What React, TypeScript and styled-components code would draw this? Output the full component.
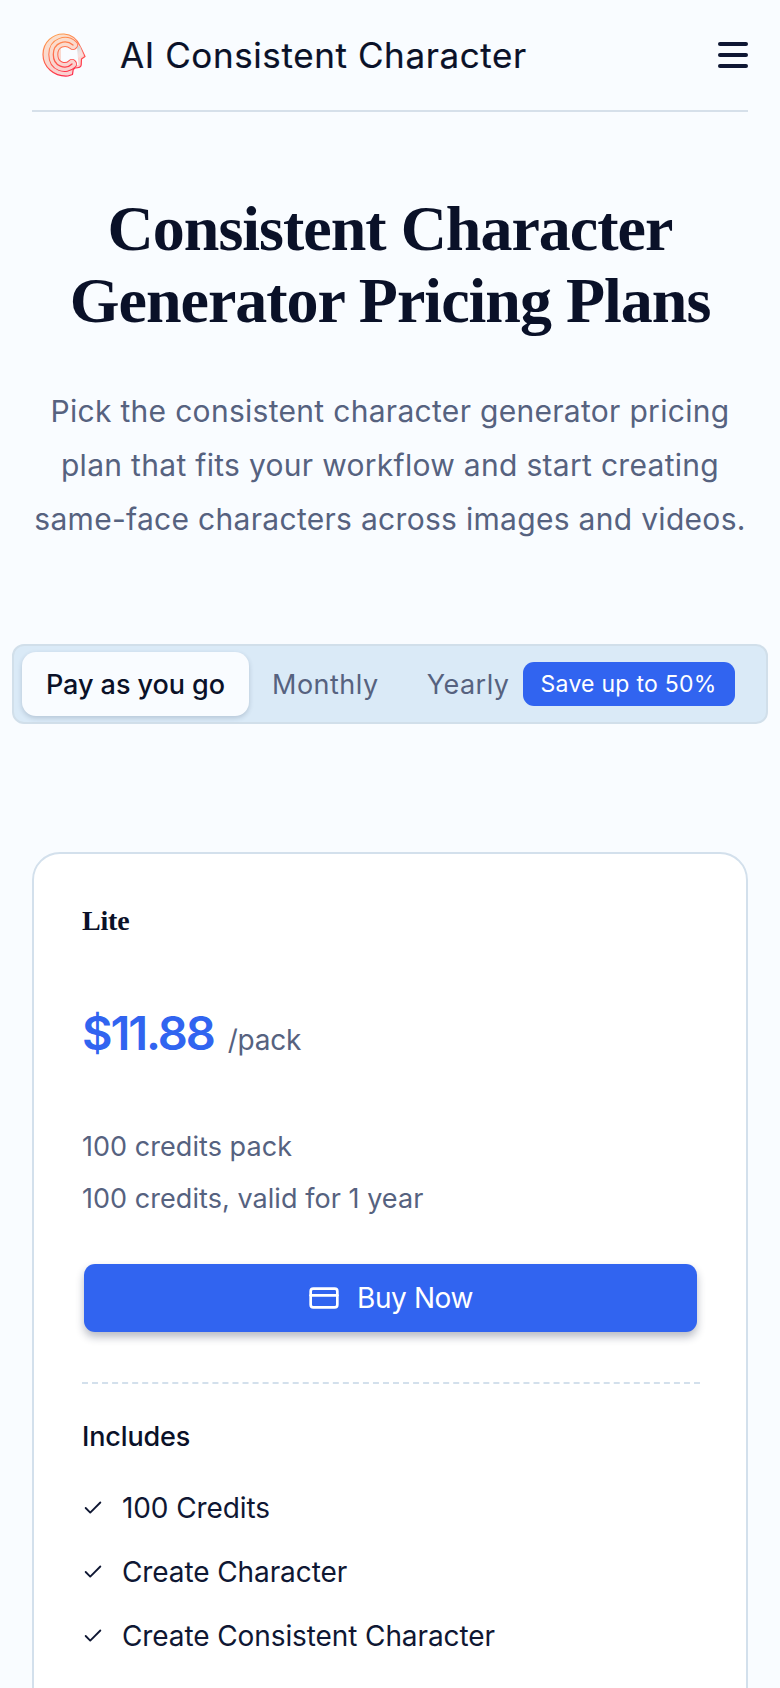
import React from "react";
import styled, { createGlobalStyle } from "styled-components";
import { Check, CreditCard } from "lucide-react";

const Global = createGlobalStyle`
  html, body { margin: 0; padding: 0; background: #f9fcff; height: 1688px; overflow: hidden; }
  * { box-sizing: border-box; }
  body { font-family: Inter, "Noto Sans", sans-serif; color: #0a1128; }
`;

const Page = styled.div`
  width: 780px;
  height: 1688px;
  overflow: hidden;
  padding: 0 32px;
`;

const Header = styled.header`
  height: 112px;
  display: flex;
  align-items: center;
  border-bottom: 2px solid #d6e0ea;
  padding: 0 0 0 10px;
`;

const LogoWrap = styled.div`
  width: 44px;
  height: 46px;
  flex: none;
  display: flex;
`;

const Brand = styled.div`
  margin-left: 34px;
  font-size: 35px;
  font-weight: 400;
  letter-spacing: 0.6px;
  flex: 1;
  color: #0a1128;
  -webkit-text-stroke: 0.2px #0a1128;
`;

const Menu = styled.div`
  width: 30px;
  display: flex;
  flex-direction: column;
  gap: 7px;
  & > i {
    display: block;
    height: 4px;
    border-radius: 2px;
    background: #0f1733;
  }
`;

const Title = styled.h1`
  margin: 0;
  padding-top: 81px;
  text-align: center;
  font-family: "Liberation Serif", serif;
  font-size: 64px;
  line-height: 72px;
  font-weight: 700;
  letter-spacing: -1px;
  color: #0a1128;
`;

const Lead = styled.p`
  margin: 0 -8px;
  padding-top: 47px;
  text-align: center;
  font-size: 30px;
  line-height: 54px;
  color: #56627f;
  letter-spacing: 0.3px;
`;

const Tabs = styled.div`
  margin: 98px -20px 0;
  height: 80px;
  display: flex;
  align-items: center;
  background: #daeaf7;
  border: 2px solid #d1dfea;
  border-radius: 12px;
  padding: 0 8px;
`;

const Tab = styled.div<{ $active?: boolean }>`
  font-size: 27px;
  font-weight: ${(p) => (p.$active ? 500 : 400)};
  height: ${(p) => (p.$active ? "64px" : "auto")};
  display: flex;
  align-items: center;
  justify-content: center;
  flex: none;
  width: ${(p) => (p.$active ? "227px" : "auto")};
  color: ${(p) => (p.$active ? "#0a1128" : "#56627f")};
  background: ${(p) => (p.$active ? "#f9fcff" : "transparent")};
  border-radius: 14px;
  box-shadow: ${(p) => (p.$active ? "0 2px 5px rgba(30,50,80,.2)" : "none")};
  letter-spacing: ${(p) => (p.$active ? "-0.05px" : "0.5px")};
`;

const Monthly = styled(Tab)`
  margin-left: 23px;
`;

const Yearly = styled(Tab)`
  margin-left: 48px;
`;

const Badge = styled.div`
  margin-left: 13px;
  width: 212px;
  height: 44px;
  border-radius: 11px;
  background: #3164f0;
  color: #fff;
  font-size: 23px;
  font-weight: 400;
  display: flex;
  align-items: center;
  justify-content: center;
  letter-spacing: 0.25px;
`;

const Card = styled.section`
  margin-top: 128px;
  height: 1000px;
  background: #fff;
  border: 2px solid #d3e0ec;
  border-radius: 28px;
  padding: 47px 48px 0 48px;
`;

const Plan = styled.h2`
  margin: 0;
  font-family: "Liberation Serif", serif;
  font-size: 28px;
  line-height: 40px;
  font-weight: 700;
  letter-spacing: -0.2px;
  color: #0a1128;
`;

const PriceRow = styled.div`
  margin-top: 60px;
  display: flex;
  align-items: baseline;
  gap: 14px;
`;

const Price = styled.span`
  font-size: 47px;
  line-height: 64px;
  font-weight: 600;
  color: #3164f0;
  letter-spacing: -2.1px;
`;

const Unit = styled.span`
  font-size: 28px;
  color: #56627f;
  letter-spacing: -0.2px;
`;

const Desc = styled.p`
  margin: 0;
  font-size: 27px;
  line-height: 52px;
  color: #56627f;
  letter-spacing: 0.05px;
`;

const DescBlock = styled.div`
  margin-top: 56px;
`;

const Buy = styled.div`
  margin: 39px 1px 0 2px;
  height: 68px;
  background: #3164f0;
  border-radius: 11px;
  color: #fff;
  font-size: 28px;
  font-weight: 400;
  display: flex;
  align-items: center;
  justify-content: center;
  gap: 17px;
  box-shadow: 0 5px 8px rgba(20, 30, 60, 0.3);
  letter-spacing: -0.4px;
`;

const Dash = styled.div`
  margin: 50px -2px 0 0;
  border-top: 2px dashed #d3e0ec;
`;

const Includes = styled.div`
  margin-top: 35px;
  font-size: 27px;
  font-weight: 500;
  line-height: 36px;
  color: #0a1128;
  letter-spacing: -0.15px;
`;

const List = styled.ul`
  list-style: none;
  margin: 33px 0 0;
  padding: 0;
  display: flex;
  flex-direction: column;
  gap: 24px;
`;

const Item = styled.li`
  display: flex;
  align-items: center;
  gap: 18px;
  font-size: 28px;
  line-height: 40px;
  color: #0f1733;
  letter-spacing: -0.1px;
`;

const C_PATH = "M31 13C24 7 11.3 10 11.3 22.5C11.3 35 24 38 30 32";

const Logo = () => (
  <svg width="44" height="46" viewBox="0 0 44 46" fill="none">
    <defs>
      <linearGradient id="lg" gradientUnits="userSpaceOnUse" x1="8" y1="3" x2="24" y2="44">
        <stop offset="0" stopColor="#ffa24f" />
        <stop offset="1" stopColor="#ff2b4b" />
      </linearGradient>
      <linearGradient id="pale" gradientUnits="userSpaceOnUse" x1="8" y1="3" x2="24" y2="44">
        <stop offset="0" stopColor="#fbe0cc" />
        <stop offset="1" stopColor="#f9cfd0" />
      </linearGradient>
      <linearGradient id="shade" gradientUnits="userSpaceOnUse" x1="24" y1="8" x2="40" y2="22">
        <stop offset="0" stopColor="#dcdcdc" stopOpacity="0" />
        <stop offset="0.7" stopColor="#d8d8da" />
        <stop offset="1" stopColor="#f4f4f6" stopOpacity="0.3" />
      </linearGradient>
    </defs>
    <path
      d="M26 44C12 45 1 35 1 22.5C1 10 11 1.5 22 2C29 2.5 35 7 38 14L43 24.5L39.5 27L39.2 33C39 35.5 37 36 33 36L31.2 37.5L30.5 42.5Z"
      fill="url(#pale)"
      stroke="url(#lg)"
      strokeWidth="1.2"
      strokeLinejoin="round"
    />
    <path d="M26 10L38 14L42 23L36 26L31 18Z" fill="url(#shade)" />
    <path d="M19 15H35L36.5 33H19Z" fill="#f9fcff" />
    <path d={C_PATH} stroke="url(#lg)" strokeWidth="10" strokeLinecap="round" />
    <path d={C_PATH} stroke="url(#pale)" strokeWidth="8" strokeLinecap="round" />
    <path d={C_PATH} stroke="url(#lg)" strokeWidth="1.3" strokeLinecap="round" />
  </svg>
);

const features = ["100 Credits", "Create Character", "Create Consistent Character"];

export default function App() {
  return (
    <Page>
      <Global />
      <Header>
        <LogoWrap>
          <Logo />
        </LogoWrap>
        <Brand>AI Consistent Character</Brand>
        <Menu>
          <i />
          <i />
          <i />
        </Menu>
      </Header>
      <Title>
        Consistent Character
        <br />
        Generator Pricing Plans
      </Title>
      <Lead>
        Pick the consistent character generator pricing
        <br />
        plan that fits your workflow and start creating
        <br />
        same-face characters across images and videos.
      </Lead>
      <Tabs>
        <Tab $active>Pay as you go</Tab>
        <Monthly>Monthly</Monthly>
        <Yearly>Yearly</Yearly>
        <Badge>Save up to 50%</Badge>
      </Tabs>
      <Card>
        <Plan>Lite</Plan>
        <PriceRow>
          <Price>$11.88</Price>
          <Unit>/pack</Unit>
        </PriceRow>
        <DescBlock>
          <Desc>100 credits pack</Desc>
          <Desc>100 credits, valid for 1 year</Desc>
        </DescBlock>
        <Buy>
          <CreditCard size={32} strokeWidth={2} />
          Buy Now
        </Buy>
        <Dash />
        <Includes>Includes</Includes>
        <List>
          {features.map((f) => (
            <Item key={f}>
              <Check size={22} strokeWidth={2} />
              {f}
            </Item>
          ))}
        </List>
      </Card>
    </Page>
  );
}
